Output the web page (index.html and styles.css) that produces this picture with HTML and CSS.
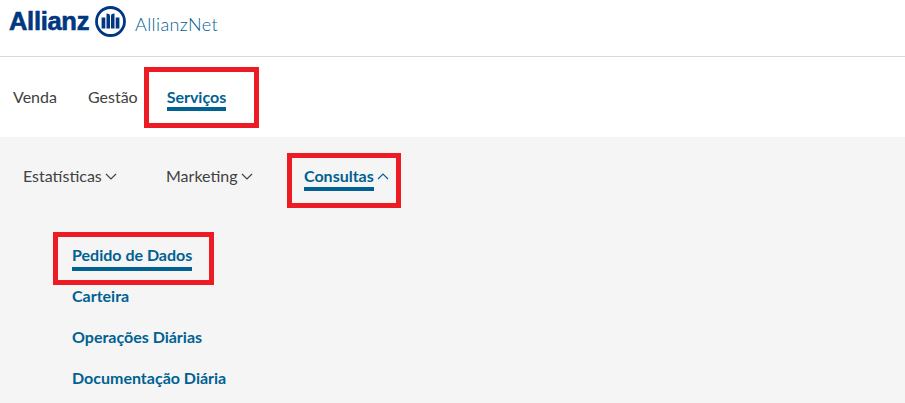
FILE: index.html
```html
<!DOCTYPE html>
<html>
<head>
<meta charset="UTF-8">
<title>AllianzNet</title>
<link rel="stylesheet" href="styles.css">
</head>
<body>
<!-- topo -->
<div class="top">
	<span class="brand">Allianz</span>
	<svg class="logo" width="31" height="31" viewBox="0 0 31 31">
		<circle cx="15.5" cy="15.5" r="14" fill="none" stroke="#003781" stroke-width="2.8"/>
		<path d="M6.6 11.5h3.7v11H6.6z M20.7 11.5h3.7v11h-3.7z M11.5 7.6c2.9 0 3.5 1 3.5 3.1v11.8h-3.5z M19.5 7.6c-2.9 0-3.5 1-3.5 3.1v11.8h3.5z" fill="#003781"/>
	</svg>
	<span class="appname">AllianzNet</span>
</div>

<!-- menu 1 -->
<div class="menu1">
	<a class="item1">Venda</a>
	<a class="item1">Gestão</a>
	<a class="item1 on">Serviços</a>
</div>

<!-- menu 2 -->
<div class="panel">
	<div class="menu2">
		<a class="item2 w1">Estatísticas <svg class="chev" width="12" height="7" viewBox="0 0 12 7"><path d="M1 1l5 5 5-5" fill="none" stroke="#414141" stroke-width="1.2"/></svg></a>
		<a class="item2 w2">Marketing <svg class="chev" width="12" height="7" viewBox="0 0 12 7"><path d="M1 1l5 5 5-5" fill="none" stroke="#414141" stroke-width="1.2"/></svg></a>
		<a class="item2 open"><span class="on">Consultas</span> <svg class="chev" width="12" height="7" viewBox="0 0 12 7"><path d="M1 6l5-5 5 5" fill="none" stroke="#006192" stroke-width="1.2"/></svg></a>
	</div>
	<div class="sub">
		<a class="subitem on">Pedido de Dados</a>
		<a class="subitem">Carteira</a>
		<a class="subitem">Operações Diárias</a>
		<a class="subitem">Documentação Diária</a>
	</div>
</div>

<!-- marcas vermelhas -->
<div class="mark mark1"></div>
<div class="mark mark2"></div>
<div class="mark mark3"></div>
</body>
</html>
```

FILE: styles.css
```css
html, body{
	margin: 0;
	padding: 0;
}
body{
	width: 905px;
	height: 403px;
	overflow: hidden;
	background: #fff;
	font-family: "Lato", "Open Sans", sans-serif;
	color: #414141;
	font-size: 16px;
}

.top{
	height: 56px;
	border-bottom: 1px solid #d9d9d9;
	display: flex;
	align-items: flex-start;
	padding-left: 9px;
}
.brand{
	font-family: "Liberation Sans", sans-serif;
	font-weight: bold;
	font-size: 25.5px;
	line-height: 24px;
	margin-top: 9px;
	color: #003781;
	letter-spacing: -0.3px;
	-webkit-text-stroke: 0.6px #003781;
}
.logo{
	margin-top: 6px;
	margin-left: 6px;
}
.appname{
	margin-left: 9px;
	margin-top: 14px;
	font-size: 18px;
	font-weight: 300;
	line-height: 20px;
	color: #006192;
	letter-spacing: 0.4px;
}

.menu1{
	height: 80px;
	display: flex;
	align-items: flex-start;
	padding-left: 13px;
	gap: 30px;
}
.item1{
	margin-top: 31px;
	line-height: 18px;
	padding-bottom: 1px;
}
.item1:first-child{
	margin-right: 1px;
}
.item1.on{
	margin-left: -1px;
}

.on{
	color: #006192;
	font-weight: bold;
	border-bottom: 4px solid #006192;
}

.panel{
	height: 266px;
	background: #f5f5f5;
	padding-left: 23px;
}
.menu2{
	display: flex;
	height: 24px;
	padding-top: 30px;
}
.item2{
	line-height: 18px;
}
.w1{
	width: 143px;
}
.w2{
	width: 138px;
}
.item2 .on{
	display: inline-block;
	padding-bottom: 2px;
}
.chev{
	margin-left: -1px;
	vertical-align: 2px;
}

.sub{
	display: flex;
	flex-direction: column;
	align-items: flex-start;
	padding-left: 49px;
	margin-top: 55px;
}
.subitem{
	color: #006192;
	font-weight: bold;
	font-size: 16px;
	line-height: 18px;
	margin-bottom: 23px;
}
.subitem.on{
	padding-bottom: 3px;
	margin-bottom: 16px;
}

.mark{
	position: absolute;
	border: 5px solid #ed1c24;
	box-sizing: border-box;
}
.mark1{
	left: 144px;
	top: 67px;
	width: 115px;
	height: 61px;
}
.mark2{
	left: 287px;
	top: 153px;
	width: 114px;
	height: 55px;
}
.mark3{
	left: 53px;
	top: 232px;
	width: 161px;
	height: 53px;
}
```
